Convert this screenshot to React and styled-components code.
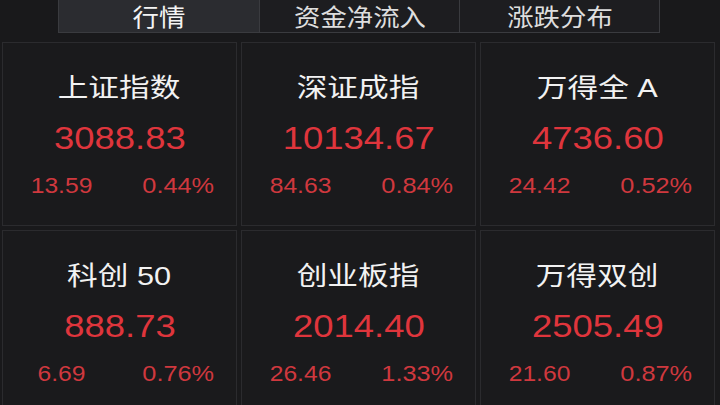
import React from "react";
import styled, { createGlobalStyle } from "styled-components";

const GlobalStyle = createGlobalStyle`
  html, body {
    margin: 0;
    padding: 0;
    background: #19191b;
  }
  body {
    font-family: "Liberation Sans", "Noto Sans CJK SC", sans-serif;
    overflow: hidden;
  }
`;

const Page = styled.div`
  width: 720px;
  height: 405px;
  overflow: hidden;
  background: #19191b;
`;

const TabBar = styled.div`
  margin: 0 0 0 58px;
  width: 602px;
  height: 33px;
  display: grid;
  grid-template-columns: repeat(3, 1fr);
  border: 1px solid #3a3b3f;
  border-top: none;
  box-sizing: border-box;
  background: #1d1d20;
`;

const Tab = styled.div`
  display: flex;
  justify-content: center;
  align-items: flex-start;
  padding-top: 2px;
  background: ${(p) => (p.$active ? "#2b2c30" : "transparent")};
  border-left: ${(p) => (p.$first ? "none" : "1px solid #3a3b3f")};
  color: ${(p) => (p.$active ? "#f4f4f4" : "#dedede")};
  font-family: "Noto Sans CJK SC", sans-serif;
  font-size: 24px;
  line-height: 27px;
`;

const Stretch = styled.span`
  display: inline-block;
  transform: scaleX(${(p) => p.$x || 1.15});
  white-space: pre;
`;

const Grid = styled.div`
  margin-top: 9px;
  padding: 0 5px 0 2px;
  display: grid;
  grid-template-columns: repeat(3, 1fr);
  grid-auto-rows: 184px;
  gap: 4px;
`;

const Cell = styled.div`
  border: 1px solid #2b2b2e;
  background: #1a1a1c;
  display: flex;
  flex-direction: column;
  align-items: center;
`;

const Title = styled.div`
  margin-top: 28px;
  height: 34px;
  line-height: 34px;
  color: #f2f2f2;
  font-size: 26px;
  font-family: "Liberation Sans", "Noto Sans CJK SC", sans-serif;
`;

const Price = styled.div`
  margin-top: 13px;
  height: 40px;
  line-height: 40px;
  color: #df353c;
  font-size: 32px;
`;

const Changes = styled.div`
  margin-top: 16px;
  width: 100%;
  display: grid;
  grid-template-columns: 1fr 1fr;
  justify-items: center;
  line-height: 24px;
  color: #cf383e;
  font-size: 22px;
`;

const tabs = ["行情", "资金净流入", "涨跌分布"];

const indices = [
  { name: "上证指数", price: "3088.83", chg: "13.59", pct: "0.44%" },
  { name: "深证成指", price: "10134.67", chg: "84.63", pct: "0.84%" },
  { name: "万得全 A", price: "4736.60", chg: "24.42", pct: "0.52%" },
  { name: "科创 50", price: "888.73", chg: "6.69", pct: "0.76%" },
  { name: "创业板指", price: "2014.40", chg: "26.46", pct: "1.33%" },
  { name: "万得双创", price: "2505.49", chg: "21.60", pct: "0.87%" },
];

export default function App() {
  return (
    <Page>
      <GlobalStyle />
      <TabBar>
        {tabs.map((t, i) => (
          <Tab key={t} $active={i === 0} $first={i === 0}>
            <Stretch $x={1.1}>{t}</Stretch>
          </Tab>
        ))}
      </TabBar>
      <Grid>
        {indices.map((d) => (
          <Cell key={d.name}>
            <Title>
              <Stretch $x={1.18}>{d.name}</Stretch>
            </Title>
            <Price>
              <Stretch $x={1.14}>{d.price}</Stretch>
            </Price>
            <Changes>
              <Stretch $x={1.12}>{d.chg}</Stretch>
              <Stretch $x={1.15}>{d.pct}</Stretch>
            </Changes>
          </Cell>
        ))}
      </Grid>
    </Page>
  );
}
